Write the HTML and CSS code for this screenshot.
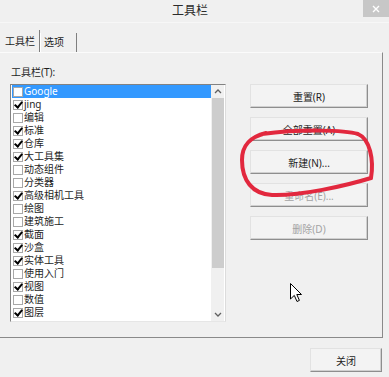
FILE: index.html
```html
<!DOCTYPE html>
<html lang="zh-CN">
<head>
  <meta charset="UTF-8">
  <title>工具栏</title>
  <link rel="stylesheet" href="styles.css">
</head>
<body>
  <div class="dialog">
    <div class="titlebar">
      <div class="title">工具栏</div>
      <div class="close-x">
        <svg width="8" height="8" viewBox="0 0 8 8"><path d="M1 1L7 7M7 1L1 7" stroke="#fff" stroke-width="1.4"/></svg>
      </div>
    </div>

    <div class="tabs">
      <div class="tab active">工具栏</div>
      <div class="tab">选项</div>
    </div>

    <div class="panel">
      <div class="left">
        <div class="label">工具栏(T):</div>
        <div class="listbox">
          <ul class="items">
            <li class="sel"><span class="chk"></span>Google</li>
            <li><span class="chk on"></span>jing</li>
            <li><span class="chk"></span>编辑</li>
            <li><span class="chk on"></span>标准</li>
            <li><span class="chk on"></span>仓库</li>
            <li><span class="chk on"></span>大工具集</li>
            <li><span class="chk"></span>动态组件</li>
            <li><span class="chk"></span>分类器</li>
            <li><span class="chk on"></span>高级相机工具</li>
            <li><span class="chk"></span>绘图</li>
            <li><span class="chk"></span>建筑施工</li>
            <li><span class="chk on"></span>截面</li>
            <li><span class="chk on"></span>沙盒</li>
            <li><span class="chk on"></span>实体工具</li>
            <li><span class="chk"></span>使用入门</li>
            <li><span class="chk on"></span>视图</li>
            <li><span class="chk"></span>数值</li>
            <li><span class="chk on"></span>图层</li>
          </ul>
          <div class="scrollbar">
            <div class="arrow up">
              <svg width="8" height="5" viewBox="0 0 8 5"><path d="M1 4L4 1L7 4" fill="none" stroke="#606060" stroke-width="1.3"/></svg>
            </div>
            <div class="thumb"></div>
            <div class="track"></div>
            <div class="arrow down">
              <svg width="8" height="5" viewBox="0 0 8 5"><path d="M1 1L4 4L7 1" fill="none" stroke="#606060" stroke-width="1.3"/></svg>
            </div>
          </div>
        </div>
      </div>

      <div class="buttons">
        <button class="btn">重置(R)</button>
        <button class="btn">全部重置(A)</button>
        <button class="btn">新建(N)...</button>
        <button class="btn" disabled>重命名(E)...</button>
        <button class="btn" disabled>删除(D)</button>
      </div>
    </div>

    <div class="footer">
      <button class="btn close">关闭</button>
    </div>

    <!-- hand drawn marker around the new button -->
    <svg class="mark" width="389" height="377" viewBox="0 0 389 377">
      <path d="M262 134 C300 129 345 130 358 134 C370 139 374 160 371 178 C345 186 300 196 272 195 C252 194 242 180 242 160 C242 145 250 137 266 133" fill="none" stroke="#e2283e" stroke-width="4" stroke-linecap="round"/>
    </svg>

    <svg class="cursor" width="13" height="20" viewBox="0 0 13 20">
      <path d="M0.5 0.5L0.5 16L4.3 12.4L7 18.5L9.4 17.4L6.8 11.5L11.5 11.5Z" fill="#fff" stroke="#000" stroke-width="1"/>
    </svg>
  </div>
</body>
</html>
```

FILE: styles.css
```css
body {
  margin: 0;
  background-color: #f0f0f0;
  font-family: 'Noto Sans', 'Noto Sans CJK SC', sans-serif;
  font-size: 10px;
  color: #1e1e1e;
}
.dialog {
  position: relative;
  width: 389px;
  height: 377px;
  overflow: hidden;
}
.titlebar {
  display: flex;
  height: 23px;
  border-bottom: 1px solid #f7f7f7;
  box-sizing: border-box;
}
.title {
  flex: 1;
  padding-left: 17px;
  text-align: center;
  font-size: 12px;
  line-height: 22px;
  color: #2b2b2b;
}
.close-x {
  width: 26px;
  height: 17px;
  background-color: #c7c7c7;
  display: flex;
  justify-content: center;
  align-items: center;
}
.tabs {
  display: flex;
  align-items: flex-end;
  height: 29px;
}
.tab {
  height: 19px;
  line-height: 19px;
  width: 37px;
  padding-left: 3px;
  box-sizing: border-box;
  border-left: 1px solid #fff;
  border-right: 1px solid #7f7f7f;
}
.tab.active {
  height: 22px;
  line-height: 22px;
  width: 40px;
  padding-left: 5px;
  border-left: none;
}
.panel {
  display: flex;
  width: 383px;
  height: 286px;
  box-sizing: border-box;
  border-top: 1px solid #fbfbfb;
  border-right: 1px solid #8a8a8a;
  border-bottom: 1px solid #8a8a8a;
  padding: 13px 0 0 10px;
}
.label {
  height: 12px;
  line-height: 12px;
  padding-left: 1px;
  margin-bottom: 6px;
}
.listbox {
  display: flex;
  width: 216px;
  height: 238px;
  box-sizing: border-box;
  background-color: #fff;
  border: 1px solid;
  border-color: #828282 #dcdcdc #e6e6e6 #828282;
  padding-right: 1px;
}
.items {
  flex: 1;
  list-style: none;
  margin: 0;
  padding: 0 0 0 1px;
}
.items li {
  display: flex;
  align-items: center;
  height: 13px;
  line-height: 13px;
  padding-left: 1px;
  white-space: nowrap;
}
.items li.sel {
  background-color: #3399ff;
  color: #fff;
}
.chk {
  position: relative;
  width: 10px;
  height: 10px;
  box-sizing: border-box;
  border: 1px solid #a8a8a8;
  background-color: #fff;
  margin-right: 1px;
  flex-shrink: 0;
}
.chk.on::after {
  content: '';
  position: absolute;
  left: 2px;
  top: -1px;
  width: 3px;
  height: 6px;
  border: solid #000;
  border-width: 0 2px 2px 0;
  transform: rotate(40deg);
}
.scrollbar {
  display: flex;
  flex-direction: column;
  width: 13px;
  background-color: #f0f0f0;
}
.arrow {
  height: 13px;
  display: flex;
  justify-content: center;
  align-items: center;
}
.arrow.down {
  height: 14px;
}
.thumb {
  height: 170px;
  margin-left: 1px;
  background-color: #cdcdcd;
}
.track {
  flex: 1;
}
.buttons {
  display: flex;
  flex-direction: column;
  gap: 9px;
  margin: 18px 0 0 24px;
}
.btn {
  width: 118px;
  height: 24px;
  padding: 0;
  font-family: inherit;
  font-size: 10px;
  color: #1e1e1e;
  background-color: #f3f3f3;
  border: 1px solid;
  border-color: #e2e2e2 #8e8e8e #8e8e8e #e2e2e2;
  box-shadow: inset -1px -1px 0 #d0d0d0;
}
.btn:disabled {
  color: #a3a3a3;
}
.footer {
  display: flex;
  justify-content: flex-end;
  padding: 10px 7px 0 0;
}
.btn.close {
  width: 72px;
}
.mark {
  position: absolute;
  left: 0;
  top: 0;
  pointer-events: none;
}
.cursor {
  position: absolute;
  left: 290px;
  top: 283px;
}
```
